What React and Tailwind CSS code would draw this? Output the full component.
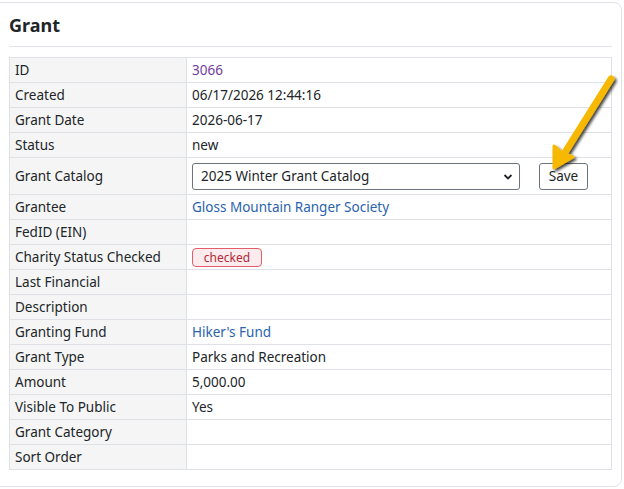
const rows = [
  { label: "ID", value: <span className="text-[#733c9f]">3066</span> },
  { label: "Created", value: "06/17/2026 12:44:16" },
  { label: "Grant Date", value: "2026-06-17" },
  { label: "Status", value: "new" },
  { label: "Grant Catalog", catalog: true },
  { label: "Grantee", value: <span className="text-[#2a63ad]">Gloss Mountain Ranger Society</span> },
  { label: "FedID (EIN)", value: "" },
  {
    label: "Charity Status Checked",
    value: (
      <span className="inline-block w-[70px] h-[19px] leading-[17px] text-center text-[12px] text-[#b02a37] bg-[#fdeced] border border-[#e35d6a] rounded-[4px]">
        checked
      </span>
    ),
  },
  { label: "Last Financial", value: "" },
  { label: "Description", value: "" },
  { label: "Granting Fund", value: <span className="text-[#2a63ad]">Hiker's Fund</span> },
  { label: "Grant Type", value: "Parks and Recreation" },
  { label: "Amount", value: "5,000.00" },
  { label: "Visible To Public", value: "Yes" },
  { label: "Grant Category", value: "" },
  { label: "Sort Order", value: "" },
];

const Arrow = () => (
  <svg
    className="absolute left-[540px] top-[66px] pointer-events-none"
    width="84"
    height="112"
    viewBox="0 0 84 112"
  >
    <defs>
      <filter id="sh" x="-30%" y="-30%" width="160%" height="160%">
        <feDropShadow dx="2" dy="2" stdDeviation="1.5" floodColor="#000" floodOpacity="0.75" />
      </filter>
    </defs>
    <g filter="url(#sh)">
      <line x1="71" y1="13" x2="24" y2="88" stroke="#f6b800" strokeWidth="7" strokeLinecap="round" />
      <path d="M14 102 L14 80 L22 87 L33 91 Z" fill="#f6b800" stroke="#f6b800" strokeWidth="3" strokeLinejoin="round" />
    </g>
  </svg>
);

const App = () => {
  return (
    <div className="relative w-[624px] h-[489px] bg-white overflow-hidden font-['Noto_Sans',sans-serif] text-[13.5px] text-[#212529]">
      <div className="absolute -left-[8px] top-[2px] w-[630px] h-[485px] border border-[#dfe3e8] rounded-[8px]"></div>
      <div className="relative pl-[9px] pr-[12px] pt-[13px]">
        <h2 className="text-[18px] font-bold leading-[24px] text-[#212529] pb-[9px] border-b border-[#dfe3e8]">
          Grant
        </h2>
        <table className="mt-[10px] w-[603px] border-collapse border border-[#dee2e6]">
          <tbody>
            {rows.map((r) => (
              <tr key={r.label} className={r.catalog ? "h-[37px]" : "h-[25px]"}>
                <td className="w-[177px] bg-[#f5f5f5] border border-[#dee2e6] px-[5px] py-0 leading-[18px] whitespace-nowrap">
                  {r.label}
                </td>
                <td className="border border-[#dee2e6] px-[5px] py-0 leading-[18px]">
                  {r.catalog ? (
                    <div className="flex items-center">
                      <div className="relative w-[328px] h-[27px] border border-[#6c757d] rounded-[3px] flex items-center pl-[8px]">
                        <span>2025 Winter Grant Catalog</span>
                        <svg className="absolute right-[6px] top-[8px]" width="10" height="10" viewBox="0 0 10 10">
                          <path d="M1.5 3 L5 6.5 L8.5 3" fill="none" stroke="#212529" strokeWidth="1.8" />
                        </svg>
                      </div>
                      <button className="ml-[19px] w-[49px] h-[27px] border border-[#6c757d] rounded-[3px] bg-white text-[13.5px]">
                        Save
                      </button>
                    </div>
                  ) : (
                    r.value
                  )}
                </td>
              </tr>
            ))}
          </tbody>
        </table>
      </div>
      <Arrow />
    </div>
  );
};

export default App;
